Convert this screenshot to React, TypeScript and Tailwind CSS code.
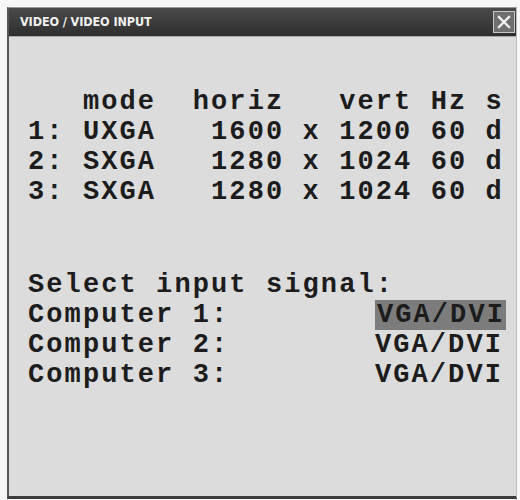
import React from "react";

const mono = { fontFamily: '"Liberation Mono", "Courier New", monospace' };

function CloseButton() {
  return (
    <div className="flex h-[22px] w-[22px] items-center justify-center border border-[#c8c8c8] bg-[#6e6e6e]">
      <svg width="14" height="14" viewBox="0 0 14 14">
        <path d="M2 2 L12 12 M12 2 L2 12" stroke="#f2f2f2" strokeWidth="2.4" strokeLinecap="square" />
      </svg>
    </div>
  );
}

export default function App() {
  const modes = [
    "   mode  horiz   vert Hz s",
    "1: UXGA   1600 x 1200 60 d",
    "2: SXGA   1280 x 1024 60 d",
    "3: SXGA   1280 x 1024 60 d",
  ];
  const inputs = ["Computer 1:", "Computer 2:", "Computer 3:"];

  return (
    <div className="h-[500px] w-[520px] bg-[#f7f7f7] pl-[7px] pt-[7px]">
      <div className="flex h-[492px] w-[510px] flex-col border-b-[3px] border-l-[2px] border-r border-t border-b-[#3c3c3c] border-l-[#555] border-r-[#bdbdbd] border-t-[#9a9a9a] bg-[#dcdcdc]">
        <div className="flex h-[29px] items-center justify-between border-b border-[#a8a8a8] bg-gradient-to-b from-[#4a4a4a] to-[#2e2e2e] pl-[11px] pr-[1px]">
          <span
            className="text-[12.5px] font-bold tracking-[-0.1px] text-[#f0f0f0]"
            style={{ fontFamily: '"DejaVu Sans Condensed", "Liberation Sans", sans-serif' }}
          >
            VIDEO / VIDEO INPUT
          </span>
          <CloseButton />
        </div>
        <div className="flex-1 pl-[19px] pt-[50px] text-[27px] font-bold leading-[30px] tracking-[2.1px] text-[#1c1c1c]" style={mono}>
          <div className="w-[478px]">
            {modes.map((m) => (
              <div key={m} className="whitespace-pre">{m}</div>
            ))}
            <div className="mt-[63px] whitespace-pre">Select input signal:</div>
            {inputs.map((label, i) => (
              <div key={label} className="flex items-center justify-between">
                <span className="whitespace-pre">{label}</span>
                <span className={i === 0 ? "inline-block h-[30px] bg-[#7c7c7c] pl-[2px] pr-[1px]" : "inline-block h-[30px] pr-[3px]"}>
                  VGA/DVI
                </span>
              </div>
            ))}
          </div>
        </div>
      </div>
    </div>
  );
}
